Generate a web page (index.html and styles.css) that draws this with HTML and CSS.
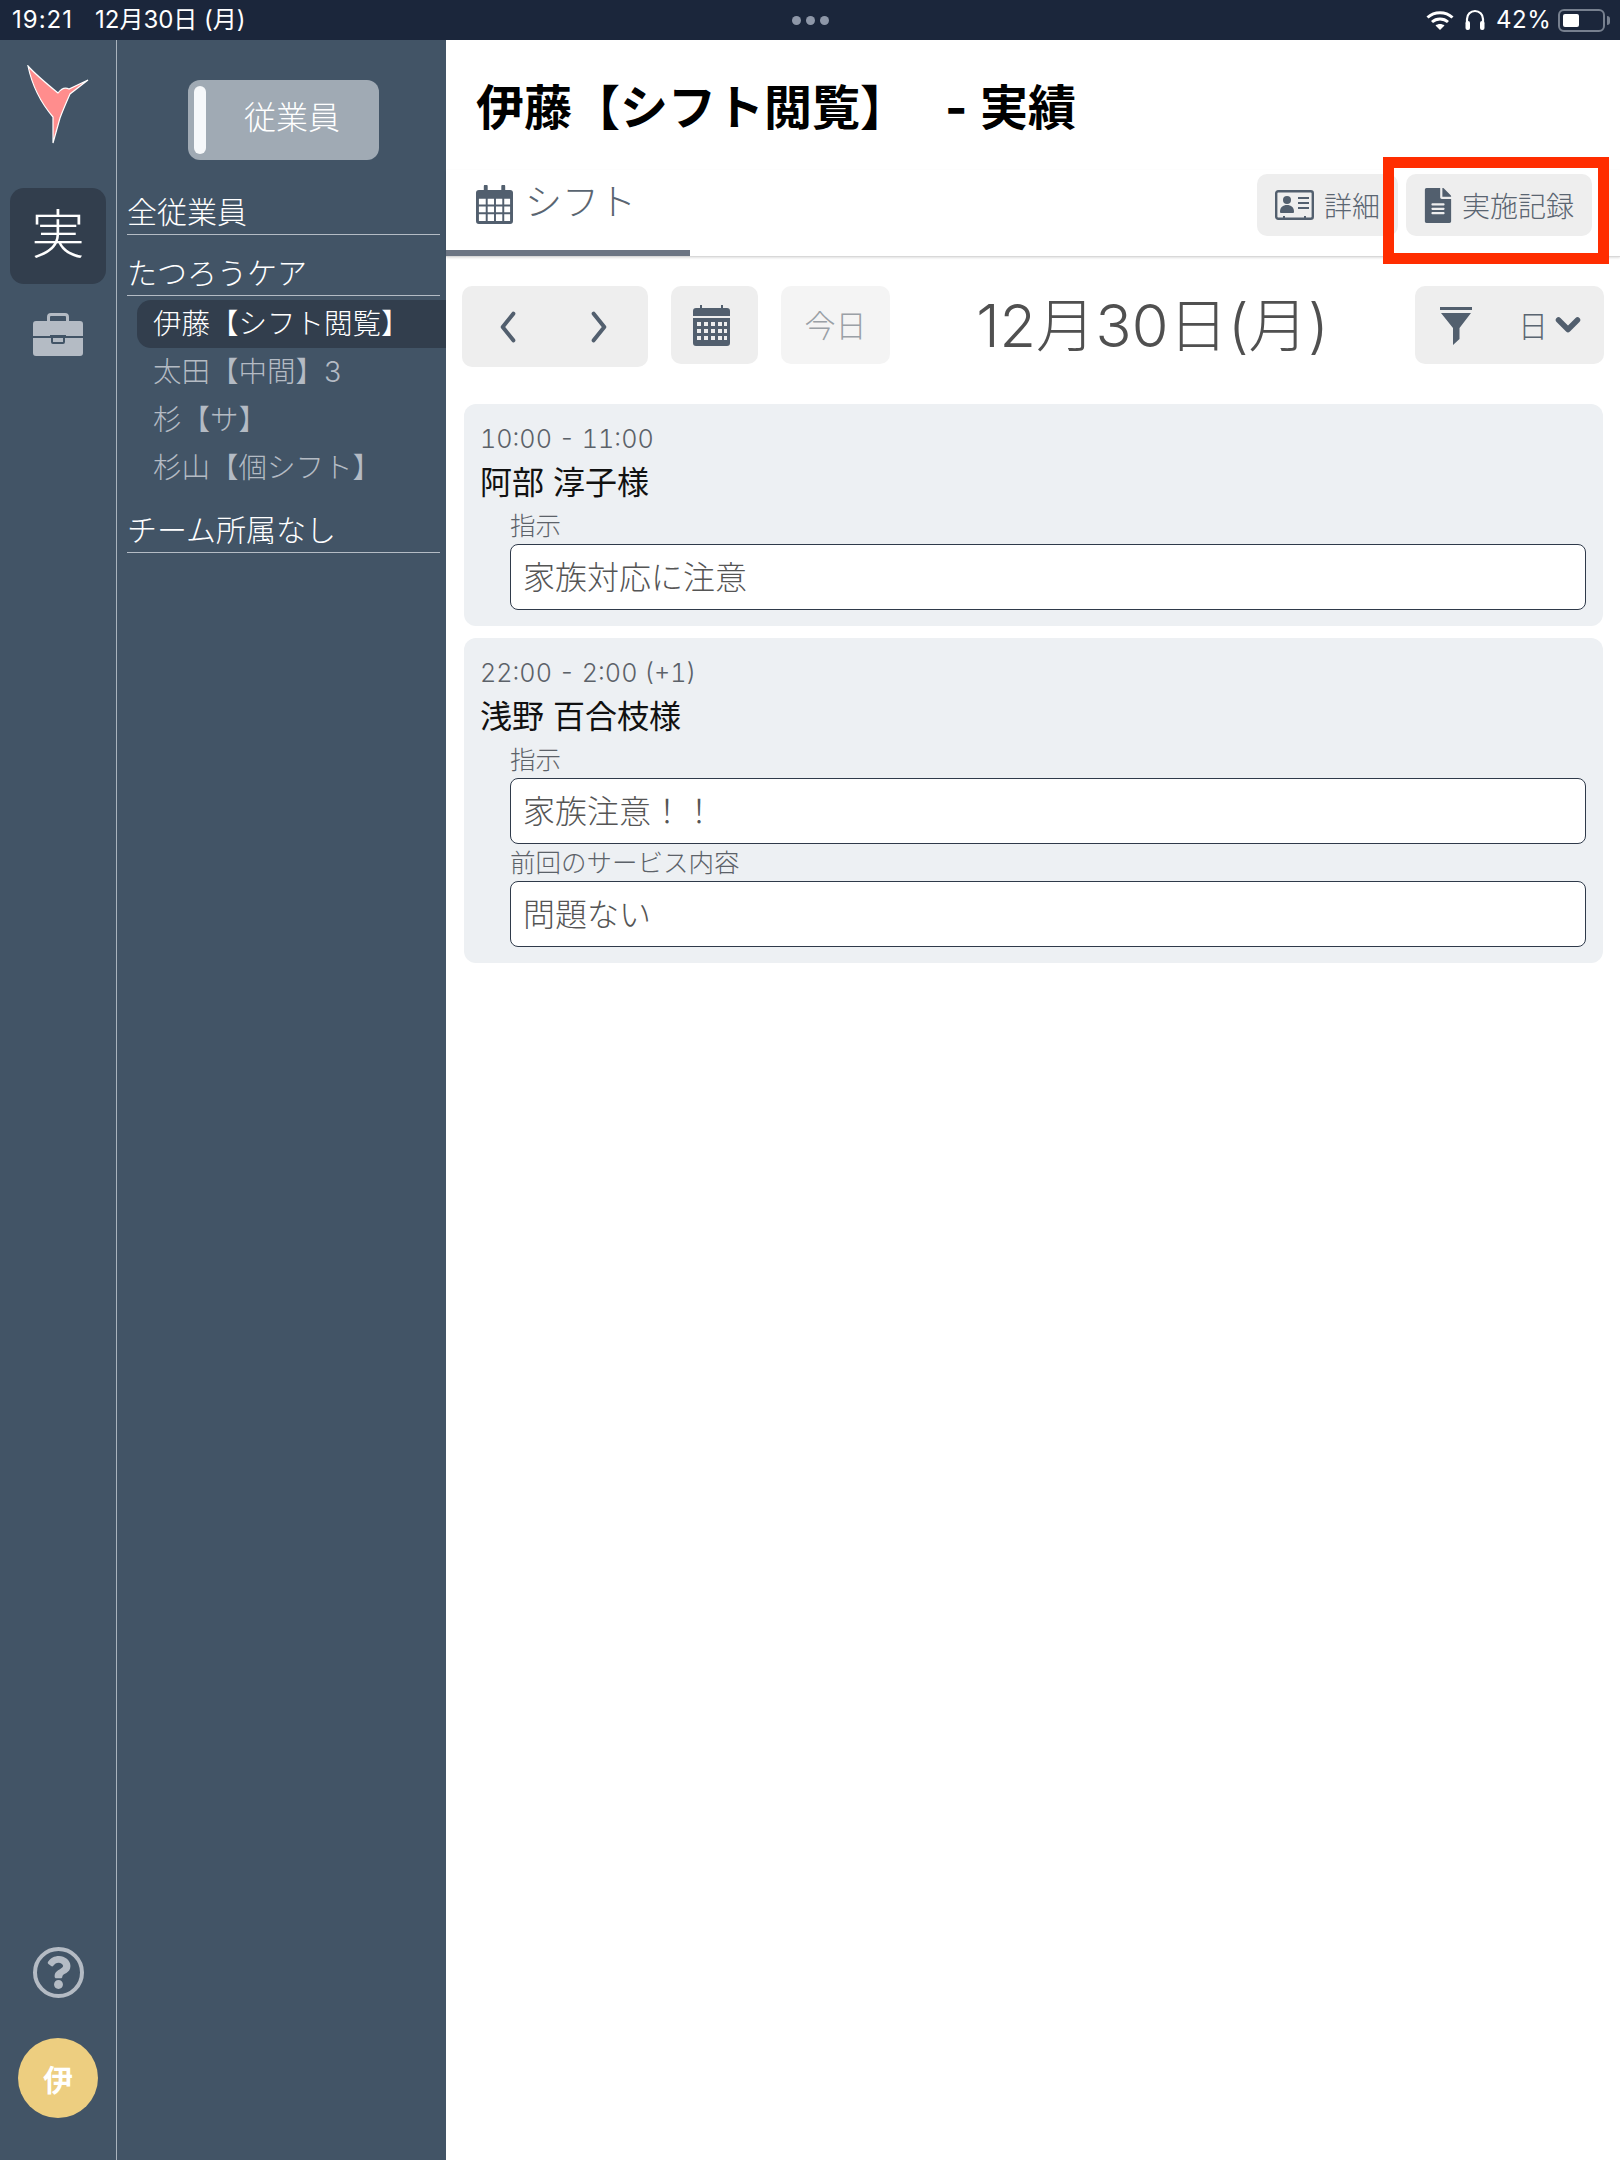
FILE: index.html
```html
<!DOCTYPE html>
<html lang="ja">
<head>
<meta charset="utf-8">
<title>実績</title>
<link rel="stylesheet" href="styles.css">
</head>
<body>
<div class="statusbar">
  <div class="st-left"><span class="st-time">19:21</span><span>12月30日 (月)</span></div>
  <div class="st-dots"><i></i><i></i><i></i></div>
  <div class="st-right">
    <svg class="ic-wifi" viewBox="0 0 28 20"><path fill="none" stroke="#fff" stroke-width="3" d="M1.500 7.500C8.500 1 19.500 1 26.500 7.500"/><path fill="none" stroke="#fff" stroke-width="3" d="M6 12c4.500-4 11.500-4 16 0"/><path fill="#fff" d="M14 20l-4.500-4.500c2.500-2 6.500-2 9 0z"/></svg>
    <svg class="ic-head" viewBox="0 0 20 22"><path fill="none" stroke="#fff" stroke-width="2.200" d="M2 15V10a8 8 0 0 1 16 0v5"/><rect x="0.500" y="12" width="4.500" height="9" rx="2" fill="#fff"/><rect x="15" y="12" width="4.500" height="9" rx="2" fill="#fff"/></svg>
    <span class="st-batt-text">42%</span>
    <div class="battery"><div class="battery-fill"></div></div><div class="battery-cap"></div>
  </div>
</div>

<div class="app">
  <nav class="rail">
    <svg class="logo" viewBox="0 0 62 79"><path fill="#ff8d8d" stroke="#fff" stroke-width="1.200" d="M1 1C9 10 20 19 31 28C34 24 38 22 42 24L61 15L43 29C39 38 36 45 33 53L26 78L26 52C14 38 5 20 1 1Z"/></svg>
    <div class="rail-tile">実</div>
    <svg class="rail-case" viewBox="0 0 50 43"><path fill="none" stroke="#b4bbc4" stroke-width="3" d="M15.500 10V4a2.500 2.500 0 0 1 2.500-2.500h14A2.500 2.500 0 0 1 34.500 4v6"/><path fill="#b4bbc4" d="M3 8h44a3 3 0 0 1 3 3v12H33v-1h-16v1H0V11a3 3 0 0 1 3-3zM0 25h18v4a2 2 0 0 0 2 2h10a2 2 0 0 0 2-2v-4h18v15a3 3 0 0 1-3 3H3a3 3 0 0 1-3-3z"/><rect x="20" y="25" width="10" height="4" fill="#b4bbc4"/></svg>
    <div class="rail-help">
      <svg viewBox="0 0 384 512"><path fill="#b4bbc4" d="M202.021 0C122.202 0 70.503 32.703 29.914 91.026c-7.363 10.580-5.093 25.086 5.178 32.874l43.138 32.709c10.373 7.865 25.132 6.026 33.253-4.148 25.049-31.381 43.630-49.449 82.757-49.449 30.764 0 68.816 19.799 68.816 49.631 0 22.552-18.617 34.134-48.993 51.164-35.423 19.860-82.299 44.576-82.299 106.405V320c0 13.255 10.745 24 24 24h72.471c13.255 0 24-10.745 24-24v-5.773c0-42.860 125.268-44.645 125.268-160.627C377.504 66.256 286.902 0 202.021 0zM192 373.459c-38.196 0-69.271 31.075-69.271 69.271 0 38.195 31.075 69.270 69.271 69.270s69.271-31.075 69.271-69.271-31.075-69.270-69.271-69.270z"/></svg>
    </div>
    <div class="avatar">伊</div>
  </nav>

  <aside class="sidebar">
    <div class="pill"><span class="pill-bar"></span><span class="pill-text">従業員</span></div>
    <div class="side-head first">全従業員</div>
    <div class="side-head">たつろうケア</div>
    <div class="side-item active">伊藤【シフト閲覧】</div>
    <div class="side-item">太田【中間】3</div>
    <div class="side-item">杉【サ】</div>
    <div class="side-item">杉山【個シフト】</div>
    <div class="side-head">チーム所属なし</div>
  </aside>

  <main class="content">
    <h1 class="title">伊藤【シフト閲覧】 &nbsp;&nbsp;- 実績</h1>
    <div class="tabbar">
      <div class="tab">
        <svg class="ic-tabcal" viewBox="0 0 38 40"><path fill="#525f6e" d="M3 5h5V1.500a2 2 0 0 1 4 0V5h14V1.500a2 2 0 0 1 4 0V5h5a3 3 0 0 1 3 3v29a3 3 0 0 1-3 3H3a3 3 0 0 1-3-3V8a3 3 0 0 1 3-3z"/><path fill="#fff" d="M3 14h7v6H3zM12 14h6.500v6H12zM20.500 14H27v6h-6.500zM29 14h6v6h-6zM3 22h7v6H3zM12 22h6.500v6H12zM20.500 22H27v6h-6.500zM29 22h6v6h-6zM3 30h7v7H3zM12 30h6.500v7H12zM20.500 30H27v7h-6.500zM29 30h6v7h-6z"/></svg>
        <span>シフト</span>
      </div>
      <div class="tab-actions">
        <div class="act act-detail">
          <svg class="ic-id" viewBox="0 0 39 30"><rect x="1.200" y="1.200" width="36.600" height="27.600" rx="2" fill="none" stroke="#525f6e" stroke-width="2.400"/><circle cx="12" cy="10" r="4" fill="#525f6e"/><path fill="#525f6e" d="M5 22c0-5 3-7 7-7s7 2 7 7c0 1-1 1-2 1H7c-1 0-2 0-2-1z"/><path stroke="#525f6e" stroke-width="2" d="M23 8h11M23 13h11M23 18h11M9 26v2M30 26v2"/></svg>
          <span>詳細</span>
        </div>
        <div class="act act-record">
          <svg class="ic-file" viewBox="0 0 384 512"><path fill="#525f6e" d="M224 136V0H24C10.700 0 0 10.700 0 24v464c0 13.300 10.700 24 24 24h336c13.300 0 24-10.700 24-24V160H248c-13.200 0-24-10.800-24-24zm64 236c0 6.600-5.400 12-12 12H108c-6.600 0-12-5.400-12-12v-8c0-6.600 5.400-12 12-12h168c6.600 0 12 5.400 12 12v8zm0-64c0 6.600-5.400 12-12 12H108c-6.600 0-12-5.400-12-12v-8c0-6.600 5.400-12 12-12h168c6.600 0 12 5.400 12 12v8zm0-72v8c0 6.600-5.400 12-12 12H108c-6.600 0-12-5.400-12-12v-8c0-6.600 5.400-12 12-12h168c6.600 0 12 5.400 12 12zm96-114.100v6.100H256V0h6.100c6.400 0 12.500 2.500 17 7l97.900 98c4.500 4.500 7 10.600 7 16.900z"/></svg>
          <span>実施記録</span>
        </div>
      </div>
    </div>

    <div class="toolbar">
      <div class="btn nav">
        <svg class="ic-chev" viewBox="0 0 20 36"><path fill="none" stroke="#525f6e" stroke-width="4.500" stroke-linecap="round" stroke-linejoin="round" d="M16 3L4 18l12 15"/></svg>
        <svg class="ic-chev" viewBox="0 0 20 36"><path fill="none" stroke="#525f6e" stroke-width="4.500" stroke-linecap="round" stroke-linejoin="round" d="M4 3l12 15L4 33"/></svg>
      </div>
      <div class="btn cal">
        <svg class="ic-cal" viewBox="0 0 37 41"><path fill="#525f6e" d="M7 0h2v3h19V0h2v3h4a3 3 0 0 1 3 3v5H0V6a3 3 0 0 1 3-3h4zM0 13h37v25a3 3 0 0 1-3 3H3a3 3 0 0 1-3-3z"/><path fill="#eee" d="M4 17h4v4H4zM11 17h4v4h-4zM18 17h4v4h-4zM25 17h4v4h-4zM31 17h3v4h-3zM4 24h4v4H4zM11 24h4v4h-4zM18 24h4v4h-4zM25 24h4v4h-4zM31 24h3v4h-3zM4 31h4v4H4zM11 31h4v4h-4zM18 31h4v4h-4zM25 31h4v4h-4zM31 31h3v4h-3z"/></svg>
      </div>
      <div class="btn today"><span class="today-text">今日</span></div>
      <div class="date">12月30日(月)</div>
      <div class="btn filter">
        <svg class="ic-filter" viewBox="0 0 32 38"><path fill="#525f6e" d="M0 0h32v3H0zM1 6h30L19.500 21v11L13 38V21z"/></svg>
        <span class="filter-day">日</span>
        <svg class="ic-down" viewBox="0 0 26 18"><path fill="none" stroke="#525f6e" stroke-width="5.500" stroke-linecap="round" stroke-linejoin="round" d="M3.500 4L13 13.500 22.500 4"/></svg>
      </div>
    </div>

    <section class="card">
      <div class="time">10:00 - 11:00</div>
      <div class="name">阿部 淳子様</div>
      <div class="fields">
        <div class="label">指示</div>
        <div class="field">家族対応に注意</div>
      </div>
    </section>
    <section class="card">
      <div class="time">22:00 - 2:00 (+1)</div>
      <div class="name">浅野 百合枝様</div>
      <div class="fields">
        <div class="label">指示</div>
        <div class="field">家族注意！！</div>
        <div class="label">前回のサービス内容</div>
        <div class="field">問題ない</div>
      </div>
    </section>

    <div class="highlight"></div>
  </main>
</div>
</body>
</html>
```
FILE: styles.css
```css
* { box-sizing: border-box; }
html, body { margin: 0; padding: 0; }
body {
  width: 1620px;
  height: 2160px;
  overflow: hidden;
  background: #fff;
  font-family: Inter, "Noto Sans CJK JP", sans-serif;
  font-weight: 300;
}

/* status bar */
.statusbar {
  height: 40px;
  background: #1b263b;
  color: #fff;
  display: grid;
  grid-template-columns: 1fr auto 1fr;
  align-items: center;
  font-size: 24px;
  line-height: 30px;
  font-weight: 400;
}
.st-left { padding-left: 12px; display: flex; align-items: baseline; }
.st-time { width: 83px; letter-spacing: 1px; }
.st-dots { display: flex; gap: 5px; }
.st-dots i { width: 9px; height: 9px; border-radius: 50%; background: #8e97a8; }
.st-right { display: flex; align-items: center; justify-content: flex-end; padding-right: 10px; }
.ic-wifi { width: 28px; height: 20px; }
.ic-head { width: 20px; height: 22px; margin-left: 11px; }
.st-batt-text { margin-left: 11px; width: 52px; letter-spacing: .5px; }
.battery { margin-left: 10px; width: 47px; height: 23px; border: 2px solid #77808f; border-radius: 6px; padding: 3px; }
.battery-fill { width: 16px; height: 13px; background: #fff; border-radius: 2px; }
.battery-cap { width: 3px; height: 9px; background: #77808f; border-radius: 0 3px 3px 0; margin-left: 2px; }

/* layout */
.app { display: flex; height: 2120px; }
.rail {
  width: 117px;
  flex: none;
  background: #425466;
  border-right: 1px solid #a9b3bd;
  display: flex;
  flex-direction: column;
  align-items: center;
  padding: 25px 0 42px;
}
.logo { width: 62px; height: 79px; }
.rail-tile {
  width: 96px;
  height: 96px;
  margin-top: 44px;
  padding-bottom: 10px;
  background: #323e4d;
  border-radius: 14px;
  color: #fff;
  font-size: 53px;
  display: flex;
  align-items: center;
  justify-content: center;
}
.rail-case { width: 50px; height: 43px; margin-top: 29px; }
.rail-help {
  margin-top: auto;
  width: 51px;
  height: 51px;
  border: 4px solid #b4bbc4;
  border-radius: 50%;
  display: flex;
  align-items: center;
  justify-content: center;
}
.rail-help svg { width: 25px; height: 33px; }
.avatar {
  margin-top: 40px;
  width: 80px;
  height: 80px;
  border-radius: 50%;
  background: #edce80;
  color: #fff;
  font-size: 30px;
  font-weight: 700;
  display: flex;
  align-items: center;
  justify-content: center;
}

/* sidebar */
.sidebar {
  width: 329px;
  flex: none;
  background: #425466;
  padding-top: 40px;
  color: #fff;
}
.pill {
  width: 191px;
  height: 80px;
  margin-left: 71px;
  background: #a0aab4;
  border-radius: 12px;
  display: flex;
  align-items: center;
  padding: 0 6px 0;
}
.pill-bar { width: 12px; height: 68px; background: #f6f8fa; border-radius: 6px; flex: none; }
.pill-text { flex: 1; text-align: center; font-size: 32px; line-height: 40px; padding: 0 0 5px 5px; }
.side-head {
  margin: 19px 6px 0 10px;
  height: 42px;
  border-bottom: 1px solid #b4bcc5;
  font-size: 30px;
  line-height: 38px;
}
.side-head.first { margin-top: 33px; }
.side-item {
  height: 48px;
  padding-left: 16px;
  margin-left: 20px;
  font-size: 28.500px;
  line-height: 47px;
  color: #b4bbc4;
  white-space: nowrap;
}
.side-item.active {
  margin-top: 4px;
  background: #323e4d;
  color: #fff;
  border-radius: 14px 0 0 14px;
}

/* content */
.content { flex: 1; position: relative; min-width: 0; }
.title {
  margin: 0;
  height: 130px;
  padding: 30px 0 0 30px;
  font-size: 48px;
  line-height: 76px;
  font-weight: 700;
  color: #000;
  white-space: nowrap;
  word-spacing: 1px;
}
.tabbar {
  height: 87px;
  display: flex;
  justify-content: space-between;
  border-bottom: 1px solid #d8d8d8;
  box-shadow: 0 1px 2px rgba(0,0,0,.12);
}
.tab {
  width: 244px;
  height: 86px;
  border-bottom: 6px solid #6c7583;
  display: flex;
  align-items: flex-start;
  padding: 8px 0 0 30px;
  font-size: 37px;
  line-height: 50px;
  color: #5a6571;
}
.tab span { margin-left: 12px; }
.ic-tabcal { width: 37px; height: 39px; margin-top: 7px; flex: none; }
.tab-actions { display: flex; gap: 8px; padding: 4px 28px 0 0; }
.act {
  height: 62px;
  background: #eeeeee;
  border-radius: 10px;
  display: flex;
  align-items: center;
  font-size: 28px;
  color: #5a6571;
}
.act-detail { width: 141px; padding-left: 18px; }
.act-detail span { margin-left: 10px; }
.act-record { width: 186px; padding-left: 17px; }
.act-record span { margin-left: 9px; }
.ic-id { width: 39px; height: 30px; flex: none; }
.ic-file { width: 30px; height: 35px; flex: none; }

.toolbar {
  margin-top: 29px;
  padding: 0 16px;
  height: 81px;
  display: flex;
  align-items: flex-start;
}
.btn { background: #eeeeee; border-radius: 10px; display: flex; align-items: center; justify-content: center; }
.nav { width: 186px; height: 81px; justify-content: flex-start; padding-left: 36px; gap: 71px; }
.ic-chev { width: 20px; height: 32px; }
.cal { width: 87px; height: 78px; margin-left: 23px; padding-right: 6px; }
.ic-cal { width: 37px; height: 41px; }
.today { width: 109px; height: 78px; margin-left: 23px; background: #f4f4f4; color: #9aa0a6; font-size: 31px; }
.today-text { padding-bottom: 3px; }
.date {
  flex: 1;
  text-align: center;
  font-size: 59.500px;
  line-height: 78px;
  color: #505050;
  white-space: nowrap;
  font-weight: 300;
}
.filter { width: 189px; height: 78px; justify-content: flex-start; padding-left: 25px; font-size: 30px; color: #5a6571; }
.ic-filter { width: 32px; height: 38px; margin-top: 2px; }
.filter-day { margin-left: 46px; padding-bottom: 3px; }
.ic-down { width: 26px; height: 18px; margin-left: 7px; }

/* cards */
.card {
  margin: 0 17px 12px 18px;
  background: #edf0f3;
  border-radius: 12px;
  padding: 17px 16px 16px 16px;
}
.toolbar + .card { margin-top: 37px; }
.time { font-size: 25.200px; line-height: 36px; color: #5c6269; font-variant-numeric: tabular-nums; }
.name { font-size: 32px; line-height: 48px; margin-top: 2px; color: #111; font-weight: 400; }
.fields { padding: 0 1px 0 30px; }
.label { font-size: 25.500px; line-height: 37px; color: #5c6269; }
.field {
  height: 66px;
  background: #fff;
  border: 1px solid #2f3a4a;
  border-radius: 8px;
  padding-left: 12px;
  font-size: 32px;
  line-height: 66px;
  color: #555;
}

/* red annotation */
.highlight {
  position: absolute;
  left: 937px;
  top: 117px;
  width: 226px;
  height: 107px;
  border: 11px solid #ff2d00;
}
```
